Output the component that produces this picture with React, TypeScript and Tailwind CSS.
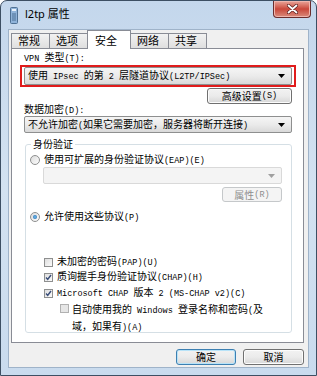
import type { FC, ReactNode } from "react";

const CJK = /([\u2E80-\u9FFF\uFF00-\uFFEF\u3000-\u303F]+)/;

// SimSun-like look: CJK runs at 10px, latin runs in a narrow mono
const Txt: FC<{ s: string }> = ({ s }) => (
  <>
    {s.split(CJK).map((p, i) =>
      i % 2 === 1 ? (
        <span key={i}>{p}</span>
      ) : p ? (
        <span key={i} className="font-['Liberation_Mono',monospace] text-[8.5px]">
          {p}
        </span>
      ) : null
    )}
  </>
);

const Arrow: FC<{ dim?: boolean }> = ({ dim }) => (
  <svg width="7" height="4" viewBox="0 0 7 4" className="shrink-0">
    <path d="M0 0h7L3.5 4z" fill={dim ? "#a0a0a0" : "#000"} />
  </svg>
);

const Select: FC<{ text?: string; disabled?: boolean; className?: string }> = ({
  text,
  disabled,
  className = "",
}) => (
  <div
    className={`flex items-center justify-between rounded-[2px] border pl-[3px] pr-[6px] ${
      disabled
        ? "border-[#d9d9d9] bg-[#f4f4f4]"
        : "border-[#8e8f8f] bg-linear-to-b from-[#f5f5f5] via-[#ebebeb] to-[#d9d9d9]"
    } ${className}`}
  >
    <span className="leading-[12px] whitespace-nowrap">{text && <Txt s={text} />}</span>
    <Arrow dim={disabled} />
  </div>
);

const Button: FC<{ children: ReactNode; className?: string; primary?: boolean; disabled?: boolean }> = ({
  children,
  className = "",
  primary,
  disabled,
}) => (
  <div
    className={`flex items-center justify-center rounded-[3px] border leading-[12px] ${
      disabled
        ? "border-[#c5c8ca] bg-[#f4f4f4] text-[#8d8d8d]"
        : primary
        ? "border-[#3c7fb1] bg-linear-to-b from-[#f2f2f2] via-[#ebebeb] to-[#d7d7d7] shadow-[inset_0_0_0_1px_#b8e3f8]"
        : "border-[#707070] bg-linear-to-b from-[#f2f2f2] via-[#ebebeb] to-[#d7d7d7] shadow-[inset_0_0_0_1px_#fcfcfc]"
    } ${className}`}
  >
    {children}
  </div>
);

const Radio: FC<{ checked?: boolean }> = ({ checked }) => (
  <div className="flex h-[10px] w-[10px] shrink-0 items-center justify-center rounded-full border border-[#8e8f8f] bg-linear-to-br from-[#dcdcdc] to-[#fdfdfd]">
    {checked && (
      <div className="h-[4px] w-[4px] rounded-full bg-[radial-gradient(circle,#6fc0f0,#1b5ea8)]" />
    )}
  </div>
);

const Check: FC<{ checked?: boolean; dim?: boolean }> = ({ checked, dim }) => (
  <div
    className={`flex h-[9px] w-[9px] shrink-0 items-center justify-center border ${
      dim ? "border-[#b1b1b1] bg-[#e6e6e6]" : "border-[#8e8f8f] bg-linear-to-br from-[#dedede] to-[#fbfbfb]"
    }`}
  >
    {checked && (
      <svg width="7" height="7" viewBox="0 0 7 7">
        <path d="M1 3.6l1.7 1.8L6 1" fill="none" stroke="#3c4f7a" strokeWidth="1.5" />
      </svg>
    )}
  </div>
);

const tabs = ["常规", "选项", "安全", "网络", "共享"];

export default function App() {
  return (
    <div className="flex h-[376px] w-[317px] flex-col overflow-hidden rounded-t-[7px] border border-[#3d4f63] bg-linear-to-b from-[#c4d7ec] via-[#d3e2f1] to-[#c9dbee] font-['Noto_Sans_CJK_SC',sans-serif] text-[10px] text-black">
      {/* title bar */}
      <div className="flex h-[28px] shrink-0 items-start">
        <svg width="8" height="17" viewBox="0 0 8 17" className="ml-[9px] mt-[6px]">
          <rect x="0.5" y="0.5" width="7" height="16" rx="1" fill="#8fb3d9" stroke="#4f7194" />
          <rect x="2" y="2" width="4" height="2" fill="#e8f1fa" />
          <path d="M2 7h4M2 9h4M2 11h4M2 13h4" stroke="#3a5f86" strokeWidth="0.8" />
        </svg>
        <span className="ml-[7px] mt-[6px] font-['Noto_Sans','Noto_Sans_CJK_SC',sans-serif] text-[11px] leading-[14px]">
          l2tp 属性
        </span>
        <div className="ml-auto mr-[5px] flex h-[17px] w-[38px] items-center justify-center rounded-b-[4px] border border-t-0 border-[#6b2d2d] bg-linear-to-b from-[#e8a59b] via-[#c9463a] to-[#d88a7c] shadow-[inset_0_0_0_1px_#efb5ad]">
          <svg width="11" height="10" viewBox="0 0 11 10">
            <path d="M1.5 1.5l8 7M9.5 1.5l-8 7" stroke="#5a1e1e" strokeWidth="3.2" strokeLinecap="round" />
            <path d="M1.5 1.5l8 7M9.5 1.5l-8 7" stroke="#fff" strokeWidth="1.8" strokeLinecap="round" />
          </svg>
        </div>
      </div>

      {/* client area */}
      <div className="mx-[7px] flex h-[339px] flex-col border border-[#9fb3c9] bg-[#f0f0f0] pl-[2px] pr-[4px]">
        {/* tabs */}
        <div className="relative z-10 flex h-[18px] items-end">
          {tabs.map((t, i) =>
            i === 2 ? (
              <div
                key={t}
                className="-mb-px -ml-px flex h-[19px] w-[44px] items-start justify-center border border-b-0 border-[#898c95] bg-white pt-[2px] pr-[6px] text-[11px] leading-[14px]"
              >
                {t}
              </div>
            ) : (
              <div
                key={t}
                className={`flex h-[15px] w-[39px] items-start border border-b-0 border-[#898c95] bg-linear-to-b from-[#f2f2f2] to-[#dfdfdf] pl-[6px] text-[11px] leading-[13px] ${
                  i > 0 ? "-ml-px" : ""
                }`}
              >
                {t}
              </div>
            )
          )}
        </div>

        {/* tab panel */}
        <div className="flex h-[295px] flex-col border border-[#898c95] bg-white">
          <div className="ml-[12px] mt-[2px] leading-[12px]">
            <Txt s="VPN 类型(T):" />
          </div>
          <div className="ml-[8px] mr-[7px] border-2 border-[#e01c1c] px-[2px]">
            <Select text="使用 IPsec 的第 2 层隧道协议(L2TP/IPSec)" className="h-[18px]" />
          </div>
          <Button className="ml-auto mr-[11px] mt-[1px] h-[16px] w-[85px]">
            <Txt s="高级设置(S)" />
          </Button>
          <div className="ml-[12px] leading-[10px]">
            <Txt s="数据加密(D):" />
          </div>
          <Select text="不允许加密(如果它需要加密，服务器将断开连接)" className="ml-[12px] mr-[11px] h-[17px]" />

          {/* group box */}
          <fieldset className="ml-[13px] mr-[11px] mt-[5px] h-[195px] rounded-[3px] border border-[#d5dfe5] px-0">
            <legend className="ml-[5px] px-[2px] leading-[12px]">身份验证</legend>
            <div className="ml-[4px] mt-[4px] flex h-[12px] items-center gap-[4px] leading-[12px]">
              <Radio />
              <span>
                <Txt s="使用可扩展的身份验证协议(EAP)(E)" />
              </span>
            </div>
            <Select disabled className="ml-[17px] mr-[9px] mt-[1px] h-[17px]" />
            <Button disabled className="ml-auto mr-[9px] mt-[3px] h-[15px] w-[60px]">
              <Txt s="属性(R)" />
            </Button>
            <div className="ml-[4px] mt-[9px] flex h-[12px] items-center gap-[4px] leading-[12px]">
              <Radio checked />
              <span>
                <Txt s="允许使用这些协议(P)" />
              </span>
            </div>
            <div className="ml-[18px] mt-[33px] flex h-[12px] items-center gap-[4px] leading-[12px]">
              <Check />
              <span>
                <Txt s="未加密的密码(PAP)(U)" />
              </span>
            </div>
            <div className="ml-[18px] mt-[3px] flex h-[12px] items-center gap-[4px] leading-[12px]">
              <Check checked />
              <span>
                <Txt s="质询握手身份验证协议(CHAP)(H)" />
              </span>
            </div>
            <div className="ml-[18px] mt-[4px] flex h-[12px] items-center gap-[4px] leading-[12px]">
              <Check checked />
              <span>
                <Txt s="Microsoft CHAP 版本 2 (MS-CHAP v2)(C)" />
              </span>
            </div>
            <div className="ml-[34px] mt-[2px] flex items-start gap-[3px]">
              <div className="mt-[3px]">
                <Check dim />
              </div>
              <div className="flex flex-col leading-[15px]">
                <div>
                  <Txt s="自动使用我的 Windows 登录名称和密码(及" />
                </div>
                <div className="-mt-[1px]">
                  <Txt s="域，如果有)(A)" />
                </div>
              </div>
            </div>
          </fieldset>
        </div>

        {/* dialog buttons */}
        <div className="mt-[6px] flex justify-end gap-[7px]">
          <Button primary className="h-[16px] w-[60px]">
            确定
          </Button>
          <Button className="h-[16px] w-[61px]">取消</Button>
        </div>
      </div>
    </div>
  );
}
